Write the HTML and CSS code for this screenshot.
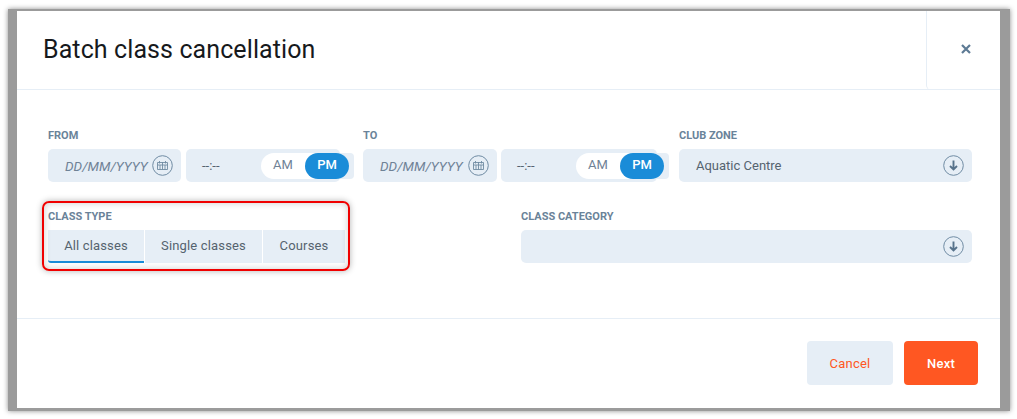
FILE: index.html
```html
<!DOCTYPE html>
<html lang="en">
<head>
  <meta charset="UTF-8" />
  <meta name="viewport" content="width=device-width, initial-scale=1.0"/>
  <title>Batch class cancellation</title>
  <link rel="stylesheet" href="styles.css">
</head>
<body>
  <div class="frame">
    <div class="modal">
      <header class="modal-head">
        <h1>Batch class cancellation</h1>
        <button class="close-btn" aria-label="Close">
          <svg width="10" height="10" viewBox="0 0 10 10"><path d="M1 1l8 8M9 1l-8 8" fill="none" stroke="#5d7a94" stroke-width="2.2"/></svg>
        </button>
      </header>

      <div class="modal-body">
        <div class="row-top">
          <div class="group">
            <label class="label">From</label>
            <div class="range">
              <div class="field date">
                <span>DD/MM/YYYY</span>
                <svg class="icon" width="21" height="21" viewBox="0 0 21 21"><circle cx="10.5" cy="10.5" r="9.8" fill="none" stroke="#6f8ba3"/><path d="M5.5 7.5h10v7h-10zM5.5 10h10M7.5 6v2.5M13.5 6v2.5M8 10v4.5M10.5 7v7.5M13 10v4.5" fill="none" stroke="#6f8ba3" stroke-width=".9"/></svg>
              </div>
              <div class="field time">
                <span>--:--</span>
                <div class="ampm-wrap">
                  <div class="ampm"><span>AM</span><span class="on">PM</span></div>
                </div>
              </div>
            </div>
          </div>

          <div class="group group-to">
            <label class="label">To</label>
            <div class="range">
              <div class="field date">
                <span>DD/MM/YYYY</span>
                <svg class="icon" width="21" height="21" viewBox="0 0 21 21"><circle cx="10.5" cy="10.5" r="9.8" fill="none" stroke="#6f8ba3"/><path d="M5.5 7.5h10v7h-10zM5.5 10h10M7.5 6v2.5M13.5 6v2.5M8 10v4.5M10.5 7v7.5M13 10v4.5" fill="none" stroke="#6f8ba3" stroke-width=".9"/></svg>
              </div>
              <div class="field time">
                <span>--:--</span>
                <div class="ampm-wrap">
                  <div class="ampm"><span>AM</span><span class="on">PM</span></div>
                </div>
              </div>
            </div>
          </div>

          <div class="group">
            <label class="label">Club zone</label>
            <div class="field select">
              <span>Aquatic Centre</span>
              <svg class="icon" width="21" height="21" viewBox="0 0 21 21"><circle cx="10.5" cy="10.5" r="9.8" fill="none" stroke="#6f8ba3"/><path d="M10.5 5.5v9M7 11l3.5 3.5L14 11" fill="none" stroke="#56728b" stroke-width="1.9"/></svg>
            </div>
          </div>
        </div>

        <div class="row-bottom">
          <div class="group class-type">
            <label class="label">Class type</label>
            <div class="tabs">
              <a class="tab active" href="#">All classes</a>
              <a class="tab tab-single" href="#">Single classes</a>
              <a class="tab tab-courses" href="#">Courses</a>
            </div>
            <div class="highlight"></div>
          </div>

          <div class="group">
            <label class="label">Class category</label>
            <div class="field select">
              <span></span>
              <svg class="icon" width="21" height="21" viewBox="0 0 21 21"><circle cx="10.5" cy="10.5" r="9.8" fill="none" stroke="#6f8ba3"/><path d="M10.5 5.5v9M7 11l3.5 3.5L14 11" fill="none" stroke="#56728b" stroke-width="1.9"/></svg>
            </div>
          </div>
        </div>
      </div>

      <footer class="modal-foot">
        <button class="btn btn-cancel">Cancel</button>
        <button class="btn btn-next">Next</button>
      </footer>
    </div>
  </div>
</body>
</html>
```

FILE: styles.css
```css
* {
  box-sizing: border-box;
}

body {
  font-family: Roboto, "Liberation Sans", sans-serif;
  margin: 0;
  padding: 9px 7px 8px 8px;
  background-color: #ffffff;
  overflow: hidden;
}

.frame {
  background-color: #9b9b9b;
  padding: 2px 10px 3px 9px;
  box-shadow: 0 0 5px rgba(0, 0, 0, 0.45);
}

.modal {
  background-color: white;
  height: 397px;
  display: flex;
  flex-direction: column;
}

.modal-head {
  height: 79px;
  flex: none;
  display: flex;
  justify-content: space-between;
  border-bottom: 1px solid #e6eef6;
}

.modal-head h1 {
  margin: 0;
  padding: 23px 0 0 26px;
  font-size: 25px;
  font-weight: 400;
  letter-spacing: 0.1px;
  line-height: 32px;
  color: #16191c;
}

.close-btn {
  width: 74px;
  background: none;
  border: none;
  border-left: 1px solid #e6eef6;
  border-bottom-left-radius: 5px;
  padding: 0 0 4px 5px;
  margin-bottom: -1px;
  display: flex;
  align-items: center;
  justify-content: center;
}

.modal-body {
  flex: 1;
  padding: 39px 28px 0 31px;
}

.row-top {
  display: grid;
  grid-template-columns: 315px 316px 293px;
}

.row-bottom {
  display: grid;
  grid-template-columns: 473px 451px;
  margin-top: 28px;
}

.group {
  position: relative;
}

.label {
  display: block;
  height: 13px;
  margin-bottom: 7px;
  font-size: 11px;
  line-height: 13px;
  font-weight: 700;
  text-transform: uppercase;
  color: #6a8399;
}

.range {
  display: flex;
  gap: 5px;
}

.group-to .range {
  gap: 4px;
}

.field {
  height: 33px;
  background-color: #e6eef6;
  border-radius: 5px;
  display: flex;
  align-items: center;
  font-size: 13px;
  color: #55636f;
}

.date {
  width: 133px;
  padding: 0 8px 0 17px;
  justify-content: space-between;
  font-style: italic;
  color: #6f8296;
  font-size: 13.5px;
}

.group-to .date {
  width: 134px;
}

.time {
  width: 154px;
  padding-left: 16px;
  justify-content: space-between;
}

.group-to .time {
  width: 156px;
}

.ampm-wrap {
  background-color: #e6eef6;
  padding-right: 5px;
  margin-right: -14px;
  border-radius: 0 4px 4px 0;
}

.group-to .ampm-wrap {
  margin-right: -12px;
}

.ampm {
  width: 88px;
  height: 26px;
  background-color: white;
  border-radius: 13px;
  display: flex;
  font-size: 13px;
  line-height: 24px;
  text-align: center;
  color: #6f8296;
}

.ampm span {
  width: 44px;
}

.ampm .on {
  background-color: #1a8cd8;
  border-radius: 13px;
  color: white;
  font-weight: 500;
}

.select {
  padding: 0 8px 0 17px;
  justify-content: space-between;
}

.class-type {
  width: 297px;
}

.tabs {
  display: flex;
  gap: 1px;
}

.tab {
  height: 33px;
  width: 96px;
  background-color: #e6eef6;
  font-size: 13px;
  letter-spacing: 0.15px;
  line-height: 32px;
  text-align: center;
  text-decoration: none;
  color: #55636f;
}

.tab.active {
  border-bottom: 2px solid #1a8cd8;
  border-radius: 0 0 0 3px;
}

.tab-single {
  width: 117px;
}

.tab-courses {
  width: 82px;
}

.highlight {
  position: absolute;
  left: -6px;
  top: -9px;
  width: 308px;
  height: 70px;
  border: 2px solid #f00000;
  border-radius: 7px;
  box-shadow: 0 0 6px rgba(0, 0, 0, 0.3), inset 0 0 7px rgba(0, 0, 0, 0.2);
}

.modal-foot {
  height: 90px;
  flex: none;
  border-top: 1px solid #e6eef6;
  padding: 22px 22px 0 0;
  display: flex;
  justify-content: flex-end;
  gap: 11px;
}

.btn {
  height: 44px;
  border: none;
  border-radius: 4px;
  font-family: inherit;
  font-size: 13px;
  letter-spacing: 0.2px;
}

.btn-cancel {
  width: 86px;
  background-color: #e6eef6;
  color: #ff5722;
}

.btn-next {
  width: 74px;
  background-color: #ff5722;
  color: white;
  font-weight: 500;
}
```
